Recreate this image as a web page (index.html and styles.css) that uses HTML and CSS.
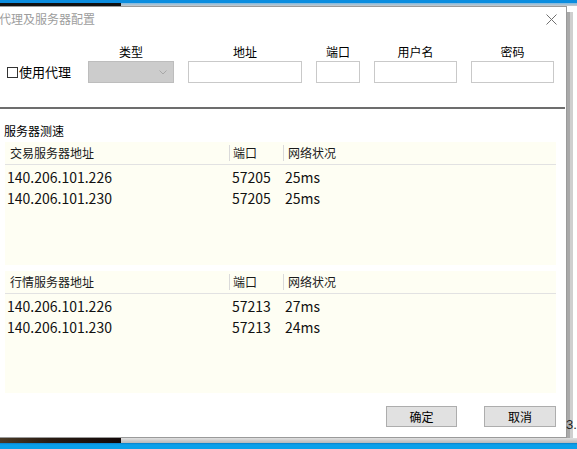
FILE: index.html
```html
<!DOCTYPE html>
<html lang="zh-CN">
<head>
<meta charset="utf-8">
<title>代理及服务器配置</title>
<link rel="stylesheet" href="styles.css">
</head>
<body>
<div class="screen">
  <div class="top-strip">
    <div class="top-blue"></div>
    <div class="top-row"><div class="top-dark"></div><div class="top-gray"></div></div>
  </div>
  <div class="middle">
    <div class="window">
      <div class="titlebar">
        <span class="title">代理及服务器配置</span>
        <svg class="close" width="11" height="11" viewBox="0 0 11 11"><path d="M0.5 0.5 L10.5 10.5 M10.5 0.5 L0.5 10.5" stroke="#707070" stroke-width="1" fill="none"/></svg>
      </div>
      <div class="proxy">
        <div class="flabel l-type">类型</div>
        <div class="flabel l-addr">地址</div>
        <div class="flabel l-port">端口</div>
        <div class="flabel l-user">用户名</div>
        <div class="flabel l-pass">密码</div>
        <div class="use-proxy"><span class="check"></span>使用代理</div>
        <div class="combo"><svg width="8" height="5" viewBox="0 0 8 5"><path d="M0.5 0.5 L4 4 L7.5 0.5" stroke="#a8a8a8" fill="none"/></svg></div>
        <div class="box"></div>
        <div class="box"></div>
        <div class="box"></div>
        <div class="box"></div>
      </div>
      <div class="divider"></div>
      <div class="section-label">服务器测速</div>
      <div class="table">
        <div class="thead">
          <div class="th c1">交易服务器地址</div>
          <div class="th c2"><i class="sep"></i>端口</div>
          <div class="th c3"><i class="sep"></i>网络状况</div>
        </div>
        <div class="tbody">
          <div class="tr"><span class="td c1">140.206.101.226</span><span class="td c2">57205</span><span class="td c3">25ms</span></div>
          <div class="tr"><span class="td c1">140.206.101.230</span><span class="td c2">57205</span><span class="td c3">25ms</span></div>
        </div>
      </div>
      <div class="table second">
        <div class="thead">
          <div class="th c1">行情服务器地址</div>
          <div class="th c2"><i class="sep"></i>端口</div>
          <div class="th c3"><i class="sep"></i>网络状况</div>
        </div>
        <div class="tbody">
          <div class="tr"><span class="td c1">140.206.101.226</span><span class="td c2">57213</span><span class="td c3">27ms</span></div>
          <div class="tr"><span class="td c1">140.206.101.230</span><span class="td c2">57213</span><span class="td c3">24ms</span></div>
        </div>
      </div>
      <div class="buttons">
        <button class="btn ok">确定</button>
        <button class="btn cancel">取消</button>
      </div>
    </div>
    <div class="side">
      <div class="side-top"></div>
      <div class="side-body"><span class="side-text">3.</span></div>
    </div>
  </div>
  <div class="bottom-strip">
    <div class="bottom-row"><div class="bottom-dark"></div><div class="bottom-gray"></div></div>
    <div class="bottom-blue"></div>
  </div>
</div>
</body>
</html>
```

FILE: styles.css
```css
* { box-sizing: border-box; }
html, body { margin: 0; padding: 0; }
body {
  width: 577px;
  height: 449px;
  overflow: hidden;
  background: #ffffff;
  font-family: "Noto Sans CJK SC", "Noto Sans", sans-serif;
  color: #000;
}
.screen { display: flex; flex-direction: column; width: 577px; height: 449px; }

/* top strip */
.top-strip { height: 6px; display: flex; flex-direction: column; }
.top-blue { height: 3px; background: #0b8ddf; }
.top-row { height: 3px; display: flex; }
.top-dark { width: 121px; background: #111111; }
.top-gray { flex: 1; background: linear-gradient(#7fb8e0, #c9c9c9); }

/* middle */
.middle { height: 432px; display: flex; }
.window {
  width: 567px;
  height: 432px;
  background: #fff;
  border-top: 1px solid #9a9a9a;
  border-right: 1px solid #9a9a9a;
  border-bottom: 1px solid #9a9a9a;
  display: flex;
  flex-direction: column;
}
.titlebar {
  height: 37px;
  display: flex;
  justify-content: space-between;
  align-items: flex-start;
  padding-right: 9px;
}
.title {
  font-size: 12px;
  line-height: 16px;
  color: #9d9d9d;
  margin-top: 4px;
  margin-left: -1px;
}
.close { margin-top: 7px; display: block; }

/* proxy row */
.proxy {
  display: grid;
  grid-template-columns: 67px 86px 114px 44px 83px 83px;
  grid-template-rows: 16px 22px;
  column-gap: 14px;
  row-gap: 1px;
  padding-left: 7px;
}
.flabel {
  font-size: 12px;
  line-height: 16px;
  text-align: center;
  color: #000;
  grid-row: 1;
}
.l-type { grid-column: 2; }
.l-addr { grid-column: 3; }
.l-port { grid-column: 4; }
.l-user { grid-column: 5; }
.l-pass { grid-column: 6; }
.use-proxy {
  grid-row: 2;
  grid-column: 1;
  display: flex;
  align-items: center;
  font-size: 13px;
  line-height: 16px;
  white-space: nowrap;
}
.check {
  width: 11px;
  height: 11px;
  border: 1px solid #333;
  background: #fff;
  margin-right: 1px;
  flex: none;
}
.combo {
  grid-row: 2;
  background: #cccccc;
  border: 1px solid #bdbdbd;
  display: flex;
  justify-content: flex-end;
  align-items: center;
  padding-right: 6px;
}
.combo svg { display: block; }
.box {
  grid-row: 2;
  background: #fff;
  border: 1px solid #c9c9c9;
}

.divider {
  margin-top: 24px;
  height: 2px;
  width: 565px;
  background: #6d6d6d;
}
.section-label {
  margin-top: 14px;
  margin-left: 4px;
  font-size: 12px;
  line-height: 16px;
}

/* tables */
.table {
  margin-top: 3px;
  margin-left: 5px;
  width: 551px;
  height: 123px;
  background: #fefef3;
}
.table.second { margin-top: 6px; height: 122px; }
.thead, .tr {
  display: grid;
  grid-template-columns: 224px 54px 1fr;
}
.thead {
  height: 23px;
  border-bottom: 1px solid #e2e2e2;
  align-items: center;
}
.th {
  font-size: 12px;
  line-height: 16px;
  color: #1a1a1a;
  display: flex;
  align-items: center;
  white-space: nowrap;
}
.th.c1 { padding-left: 5px; }
.sep { display: block; width: 1px; height: 16px; background: #dadada; margin-right: 3px; }
.th.c3 .sep { margin-right: 4px; }
.tbody { padding-top: 2px; }
.tr { height: 21px; }
.td {
  font-size: 14px;
  line-height: 21px;
  color: #111;
  white-space: nowrap;
}
.td.c1 { padding-left: 2px; }
.td.c2 { padding-left: 3px; }
.td.c3 { padding-left: 2px; }

/* buttons */
.buttons {
  margin-top: 13px;
  display: flex;
  justify-content: flex-end;
  gap: 27px;
  padding-right: 10px;
}
.btn {
  width: 72px;
  height: 21px;
  padding: 0;
  margin: 0;
  background: #e1e1e1;
  border: 1px solid #adadad;
  font-family: "Noto Sans CJK SC", sans-serif;
  font-size: 12px;
  line-height: 17px;
  color: #000;
}
.btn.ok { width: 71px; }

/* right side behind the window */
.side { flex: 1; display: flex; flex-direction: column; }
.side-top { height: 6px; background: #fff; }
.side-body {
  flex: 1;
  background: linear-gradient(to right, #a9a9a9 0, #a9a9a9 3px, #cfcfcf 3px, #cfcfcf 6px, #ffffff 6px);
  display: flex;
  flex-direction: column;
  justify-content: flex-end;
  padding-bottom: 6px;
}
.side-text {
  font-family: "Liberation Sans", sans-serif;
  font-size: 13px;
  line-height: 14px;
  color: #222;
  margin-left: -1px;
}

/* bottom strip */
.bottom-strip { height: 11px; display: flex; flex-direction: column; }
.bottom-row { height: 5px; display: flex; }
.bottom-dark { width: 121px; background: linear-gradient(to right, #4a3a26, #2a1c12 40%, #120808); }
.bottom-gray { flex: 1; background: linear-gradient(#e0e0e0, #b8b8b8); }
.bottom-blue { flex: 1; background: linear-gradient(#0a7fc8, #0aa0ea 30%, #0aa0ea); }
```
